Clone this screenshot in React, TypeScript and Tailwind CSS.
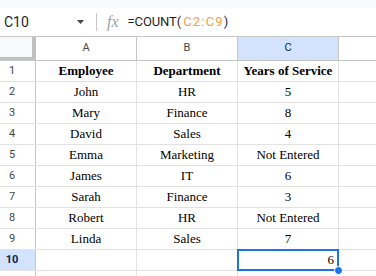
import React from 'react';

const data: string[][] = [
  ['Employee', 'Department', 'Years of Service'],
  ['John', 'HR', '5'],
  ['Mary', 'Finance', '8'],
  ['David', 'Sales', '4'],
  ['Emma', 'Marketing', 'Not Entered'],
  ['James', 'IT', '6'],
  ['Sarah', 'Finance', '3'],
  ['Robert', 'HR', 'Not Entered'],
  ['Linda', 'Sales', '7'],
];

const serif = { fontFamily: '"Liberation Serif", "Times New Roman", serif' };

const App = () => {
  return (
    <div
      className="w-[376px] h-[276px] overflow-hidden bg-white text-black"
      style={{ fontFamily: 'Roboto, "Liberation Sans", Arial, sans-serif' }}
    >
      {/* top strip */}
      <div className="h-[8px] bg-[#f8f9fa]" />

      {/* formula bar */}
      <div className="h-[29px] flex items-center border-b border-[#c4c7c5]">
        <div className="w-[90px] flex items-center justify-between pl-[4px] pr-[6px]">
          <span className="text-[14px] text-[#1f1f1f]">C10</span>
          <svg width="7" height="4" viewBox="0 0 7 4">
            <path d="M0 0 L7 0 L3.5 4 Z" fill="#444746" />
          </svg>
        </div>
        <div className="ml-[6px] w-px h-[18px] bg-[#c4c7c5]" />
        <span className="ml-[10px] text-[16px] italic text-[#9aa0a6] leading-none" style={serif}>
          fx
        </span>
        <div className="ml-[9px] text-[13px] text-[#1f1f1f] tracking-[-0.1px]">
          =COUNT(<span className="ml-[2px] text-[#f4a048] tracking-[1.2px]">C2:C9</span>)
        </div>
      </div>

      {/* column headers */}
      <div className="h-[24px] flex border-b border-[#c4c7c5] text-[11px] text-[#444746]">
        <div className="w-[36px] h-full bg-[#f8f9fa] border-r-[4px] border-b-[3px] border-[#c0c0c0]" />
        <div className="w-[101px] border-r border-[#c4c7c5] flex items-center justify-center">A</div>
        <div className="w-[101px] border-r border-[#c4c7c5] flex items-center justify-center">B</div>
        <div className="w-[101px] border-r border-[#c4c7c5] bg-[#d3e3fd] text-[#0b1f4d] flex items-center justify-center">
          C
        </div>
        <div className="flex-1" />
      </div>

      {/* rows */}
      {data.map((row, i) => (
        <div key={i} className="h-[21px] flex border-b border-[#e2e2e2]">
          <div className="w-[36px] border-r border-[#c4c7c5] pr-[11px] flex items-center justify-center text-[11px] text-[#444746]">
            {i + 1}
          </div>
          {row.map((cell, j) => (
            <div
              key={j}
              className={`w-[101px] border-r border-[#e2e2e2] flex items-center justify-center text-[13px] ${
                i === 0 ? 'font-bold' : ''
              }`}
              style={serif}
            >
              {cell}
            </div>
          ))}
          <div className="flex-1" />
        </div>
      ))}

      {/* row 10 */}
      <div className="h-[21px] flex border-b border-[#e2e2e2]">
        <div className="w-[36px] border-r border-[#c4c7c5] bg-[#d3e3fd] pr-[11px] flex items-center justify-center text-[11px] font-bold text-[#0b1f4d]">
          10
        </div>
        <div className="w-[101px] border-r border-[#e2e2e2]" />
        <div className="w-[101px] border-r border-[#e2e2e2]" />
        <div className="relative w-[101px] border-r border-[#e2e2e2] flex items-center justify-end pr-[4px] text-[13px]" style={serif}>
          6
          <div className="absolute -left-[1px] -top-[1px] -right-[1px] -bottom-[1px] border-2 border-[#1a73e8]" />
          <div className="absolute -right-[5px] -bottom-[5px] w-[9px] h-[9px] rounded-full bg-[#1a73e8] border border-white" />
        </div>
        <div className="flex-1" />
      </div>

      {/* row 11 */}
      <div className="h-[21px] flex">
        <div className="w-[36px] border-r border-[#c4c7c5]" />
        <div className="w-[101px] border-r border-[#e2e2e2]" />
        <div className="w-[101px] border-r border-[#e2e2e2]" />
        <div className="w-[101px] border-r border-[#e2e2e2]" />
        <div className="flex-1" />
      </div>
    </div>
  );
};

export default App;
